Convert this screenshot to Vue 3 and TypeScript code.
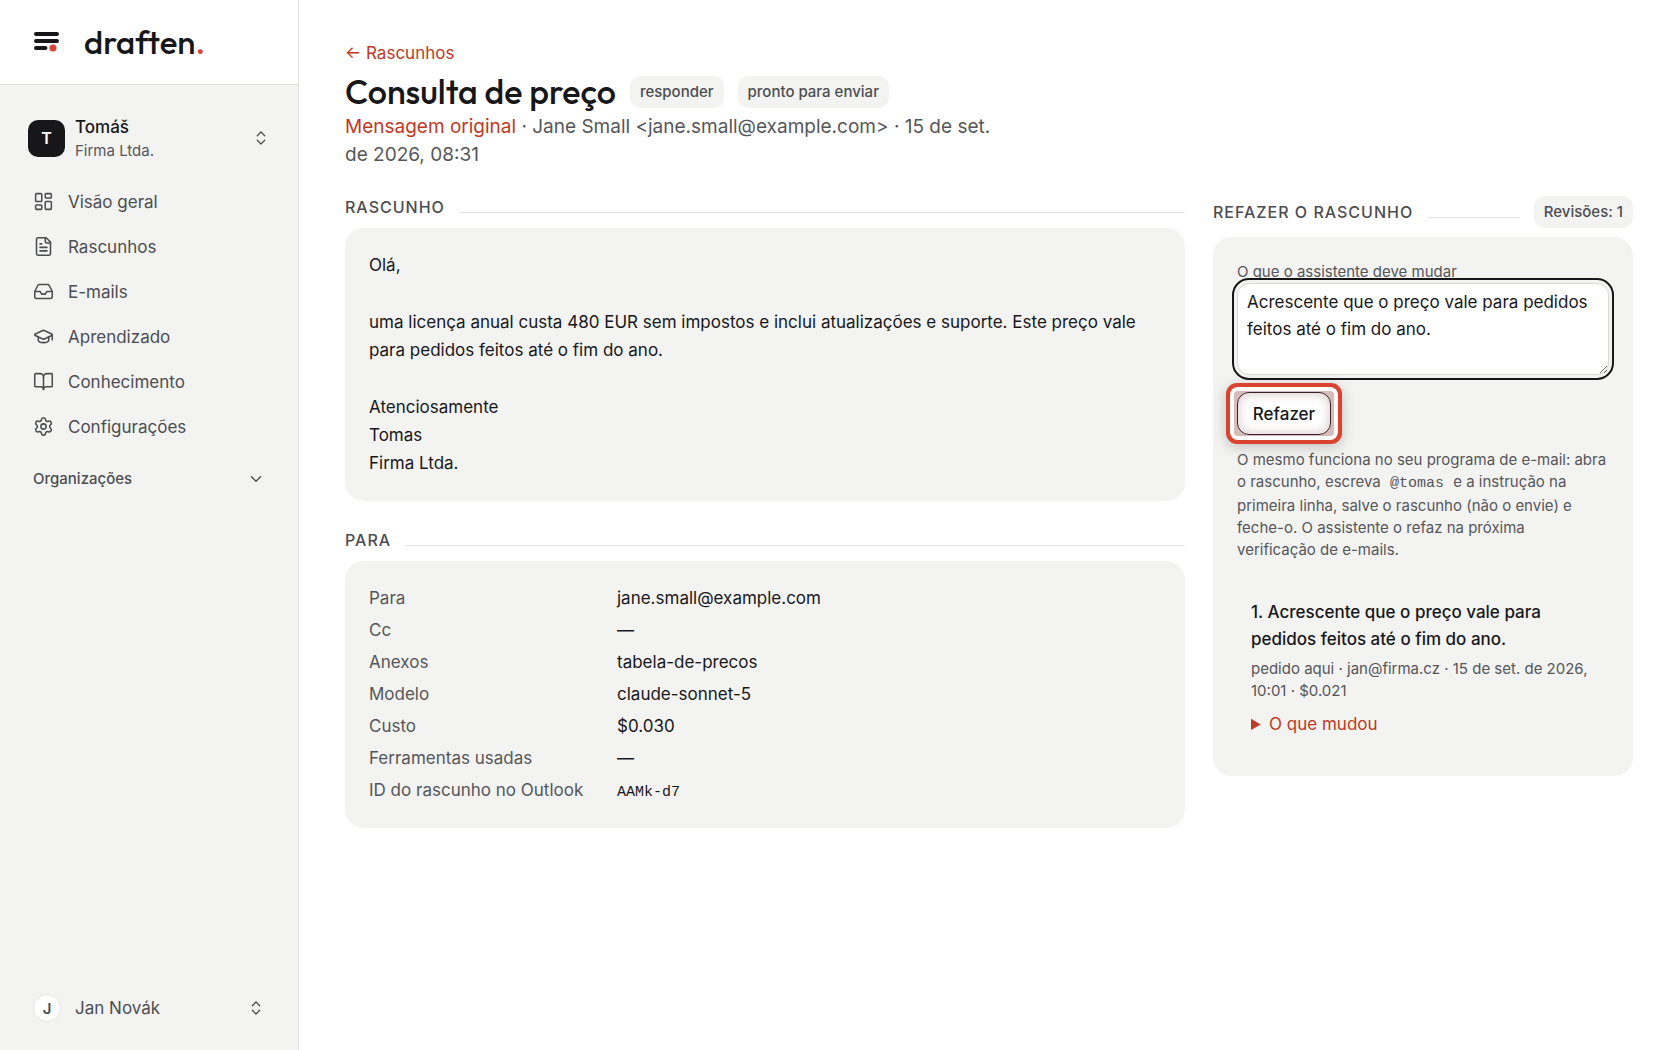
<script setup lang="ts">
import { ref } from 'vue'

interface NavItem {
  label: string
  icon: string[]
}

const navItems: NavItem[] = [
  {
    label: 'Visão geral',
    icon: [
      'M4 3h5a1 1 0 0 1 1 1v7a1 1 0 0 1-1 1H4a1 1 0 0 1-1-1V4a1 1 0 0 1 1-1z',
      'M15 3h5a1 1 0 0 1 1 1v3a1 1 0 0 1-1 1h-5a1 1 0 0 1-1-1V4a1 1 0 0 1 1-1z',
      'M15 12h5a1 1 0 0 1 1 1v7a1 1 0 0 1-1 1h-5a1 1 0 0 1-1-1v-7a1 1 0 0 1 1-1z',
      'M4 16h5a1 1 0 0 1 1 1v3a1 1 0 0 1-1 1H4a1 1 0 0 1-1-1v-3a1 1 0 0 1 1-1z',
    ],
  },
  {
    label: 'Rascunhos',
    icon: [
      'M15 2H6a2 2 0 0 0-2 2v16a2 2 0 0 0 2 2h12a2 2 0 0 0 2-2V7Z',
      'M14 2v4a2 2 0 0 0 2 2h4',
      'M10 9H8',
      'M16 13H8',
      'M16 17H8',
    ],
  },
  {
    label: 'E-mails',
    icon: [
      'M22 12h-6l-2 3h-4l-2-3H2',
      'M5.45 5.11 2 12v6a2 2 0 0 0 2 2h16a2 2 0 0 0 2-2v-6l-3.45-6.89A2 2 0 0 0 16.76 4H7.24a2 2 0 0 0-1.79 1.11z',
    ],
  },
  {
    label: 'Aprendizado',
    icon: [
      'M21.42 10.922a1 1 0 0 0-.019-1.838L12.83 5.18a2 2 0 0 0-1.66 0L2.6 9.08a1 1 0 0 0 0 1.832l8.57 3.908a2 2 0 0 0 1.66 0z',
      'M22 10v6',
      'M6 12.5V16a6 3 0 0 0 12 0v-3.5',
    ],
  },
  {
    label: 'Conhecimento',
    icon: [
      'M12 7v14',
      'M3 18a1 1 0 0 1-1-1V4a1 1 0 0 1 1-1h5a4 4 0 0 1 4 4 4 4 0 0 1 4-4h5a1 1 0 0 1 1 1v13a1 1 0 0 1-1 1h-6a3 3 0 0 0-3 3 3 3 0 0 0-3-3z',
    ],
  },
  {
    label: 'Configurações',
    icon: [
      'M9.671 4.136a2.34 2.34 0 0 1 4.659 0 2.34 2.34 0 0 0 3.319 1.915 2.34 2.34 0 0 1 2.33 4.033 2.34 2.34 0 0 0 0 3.831 2.34 2.34 0 0 1-2.33 4.033 2.34 2.34 0 0 0-3.319 1.915 2.34 2.34 0 0 1-4.659 0 2.34 2.34 0 0 0-3.32-1.915 2.34 2.34 0 0 1-2.33-4.033 2.34 2.34 0 0 0 0-3.831A2.34 2.34 0 0 1 6.35 6.051a2.34 2.34 0 0 0 3.319-1.915',
      'M15 12a3 3 0 1 1-6 0 3 3 0 0 1 6 0z',
    ],
  },
]

const details = [
  { term: 'Para', value: 'jane.small@example.com' },
  { term: 'Cc', value: '—' },
  { term: 'Anexos', value: 'tabela-de-precos' },
  { term: 'Modelo', value: 'claude-sonnet-5' },
  { term: 'Custo', value: '$0.030' },
  { term: 'Ferramentas usadas', value: '—' },
  { term: 'ID do rascunho no Outlook', value: 'AAMk-d7', mono: true },
]

const instruction = ref('Acrescente que o preço vale para pedidos feitos até o fim do ano.')
</script>

<template>
  <div class="app">
    <aside class="sidebar">
      <div class="brand">
        <svg class="brand-mark" viewBox="0 0 28 22" aria-hidden="true">
          <g stroke="#17171a" stroke-width="4" stroke-linecap="round">
            <path d="M3 3h21M3 10h21M3 17h9.500" />
          </g>
          <circle cx="20" cy="17" r="3.500" fill="#d9432f" />
        </svg>
        <span class="brand-name">draften<span class="brand-dot">.</span></span>
      </div>

      <div class="side-body">
        <button class="switcher" type="button">
          <span class="avatar">T</span>
          <span class="who">
            <strong>Tomáš</strong>
            <small>Firma Ltda.</small>
          </span>
          <svg class="icon small" viewBox="0 0 24 24"><path d="m7 15 5 5 5-5M7 9l5-5 5 5" /></svg>
        </button>

        <nav class="nav">
          <a v-for="item in navItems" :key="item.label" href="#">
            <svg class="icon" viewBox="0 0 24 24" aria-hidden="true">
              <path v-for="d in item.icon" :key="d" :d="d" />
            </svg>
            {{ item.label }}
          </a>
        </nav>

        <button class="group" type="button">
          Organizações
          <svg class="icon small" viewBox="0 0 24 24"><path d="m6 9 6 6 6-6" /></svg>
        </button>

        <button class="account" type="button">
          <span class="initial">J</span>
          <span class="account-name">Jan Novák</span>
          <svg class="icon small" viewBox="0 0 24 24"><path d="m7 15 5 5 5-5M7 9l5-5 5 5" /></svg>
        </button>
      </div>
    </aside>

    <main class="main">
      <header class="page-head">
        <a class="back" href="#">← Rascunhos</a>
        <div class="title-row">
          <h1>Consulta de preço</h1>
          <span class="pill">responder</span>
          <span class="pill">pronto para enviar</span>
        </div>
        <p class="meta">
          <a href="#">Mensagem original</a> · Jane Small &lt;jane.small@example.com&gt; · 15 de set. de 2026, 08:31
        </p>
      </header>

      <div class="columns">
        <div class="col">
          <section>
            <h2 class="section-head">Rascunho</h2>
            <div class="card letter">
              <p>Olá,</p>
              <p>uma licença anual custa 480 EUR sem impostos e inclui atualizações e suporte. Este preço vale para pedidos feitos até o fim do ano.</p>
              <p>Atenciosamente<br />Tomas<br />Firma Ltda.</p>
            </div>
          </section>

          <section>
            <h2 class="section-head">Para</h2>
            <dl class="card details">
              <template v-for="row in details" :key="row.term">
                <dt>{{ row.term }}</dt>
                <dd :class="{ mono: row.mono }">{{ row.value }}</dd>
              </template>
            </dl>
          </section>
        </div>

        <section>
          <div class="section-row">
            <h2 class="section-head">Refazer o rascunho</h2>
            <span class="pill">Revisões: 1</span>
          </div>
          <div class="card redo">
            <label for="instruction">O que o assistente deve mudar</label>
            <textarea id="instruction" v-model="instruction" rows="3"></textarea>
            <div class="spotlight">
              <button class="redo-button" type="button">Refazer</button>
            </div>
            <p class="hint">
              O mesmo funciona no seu programa de e-mail: abra o rascunho, escreva
              <code>@tomas</code> e a instrução na primeira linha, salve o rascunho (não o envie) e
              feche-o. O assistente o refaz na próxima<br />verificação de e-mails.
            </p>
            <article class="revision">
              <h3>1. Acrescente que o preço vale para pedidos feitos até o fim do ano.</h3>
              <p>pedido aqui · jan@firma.cz · 15 de set. de 2026, 10:01 · $0.021</p>
              <details>
                <summary>O que mudou</summary>
              </details>
            </article>
          </div>
        </section>
      </div>
    </main>
  </div>
</template>

<style>
body {
  margin: 0;
  background: #fff;
}
</style>

<style scoped>
.app {
  display: grid;
  grid-template-columns: 299px minmax(0, 1fr);
  min-height: 100vh;
  font-family: Inter, "Liberation Sans", sans-serif;
  font-size: 17px;
  line-height: 28px;
  color: #17171a;
}

*,
*::before,
*::after {
  box-sizing: border-box;
}

h1,
h2,
h3,
p,
dl,
dd {
  margin: 0;
}

a {
  color: #be3a25;
  text-decoration: none;
}

button {
  border: 0;
  padding: 0;
  background: none;
  color: inherit;
  font: inherit;
  text-align: left;
}

/* Sidebar */
.sidebar {
  display: flex;
  flex-direction: column;
  background: #f3f3f1;
  border-right: 1px solid #e4e4e2;
}

.brand {
  display: flex;
  align-items: center;
  gap: 23px;
  height: 85px;
  padding-left: 33px;
  background: #fff;
  border-bottom: 1px solid #e0e0de;
}

.brand-mark {
  width: 28px;
  height: 22px;
}

.brand-name {
  font-family: Outfit, Lato, sans-serif;
  font-size: 33px;
  font-weight: 500;
}

.brand-dot {
  color: #d9432f;
}

.side-body {
  flex: 1;
  display: flex;
  flex-direction: column;
  padding: 28px;
}

.icon {
  flex: none;
  width: 21px;
  height: 21px;
  fill: none;
  stroke: currentColor;
  stroke-width: 1.75;
  stroke-linecap: round;
  stroke-linejoin: round;
}

.icon.small {
  width: 18px;
  height: 18px;
  color: #4c4d51;
  margin-left: auto;
}

.switcher {
  display: flex;
  align-items: center;
  gap: 10px;
  height: 50px;
}

.avatar {
  display: grid;
  place-items: center;
  width: 37px;
  height: 37px;
  border-radius: 10px;
  background: #17171a;
  color: #fff;
  font-size: 16px;
  font-weight: 600;
}

.who {
  display: flex;
  flex-direction: column;
  padding-top: 2px;
  line-height: 24px;
}

.who strong {
  font-weight: 500;
}

.who small {
  font-size: 15px;
  color: #55565a;
}

.nav {
  display: flex;
  flex-direction: column;
  margin-top: 16px;
}

.nav a {
  display: flex;
  align-items: center;
  gap: 14px;
  height: 45px;
  padding-left: 5px;
  color: #4c4d51;
}

.group {
  display: flex;
  align-items: center;
  height: 36px;
  margin-top: 12px;
  padding: 0 5px;
  color: #4c4d51;
  font-size: 15px;
  font-weight: 500;
}

.account {
  display: flex;
  align-items: center;
  gap: 14px;
  margin-top: auto;
  padding: 0 5px;
  color: #4c4d51;
}

.initial {
  display: grid;
  place-items: center;
  width: 28px;
  height: 28px;
  border: 1px solid #e4e4e2;
  border-radius: 50%;
  background: #fff;
  font-size: 15px;
  font-weight: 600;
}

/* Page */
.main {
  padding: 39px 47px 39px 46px;
}

.page-head {
  display: flex;
  flex-direction: column;
}

.back {
  align-self: flex-start;
}

.title-row {
  display: flex;
  align-items: center;
  gap: 14px;
  padding-top: 3px;
}

h1 {
  font-family: Outfit, Lato, sans-serif;
  font-size: 34px;
  font-weight: 500;
  line-height: 43px;
}

.pill {
  flex: none;
  padding: 2px 10px;
  border-radius: 10px;
  background: #f3f3f1;
  color: #4c4d51;
  font-size: 15px;
  font-weight: 500;
}

.meta {
  max-width: 654px;
  font-size: 19px;
  color: #55565a;
}

.columns {
  display: grid;
  grid-template-columns: minmax(0, 2fr) minmax(0, 1fr);
  gap: 28px;
  align-items: start;
  margin-top: 27px;
}

.col {
  display: flex;
  flex-direction: column;
  gap: 28px;
}

.section-head {
  flex: 1;
  display: flex;
  align-items: baseline;
  gap: 14px;
  margin-bottom: 10px;
  color: #4c4d51;
  font-size: 16px;
  font-weight: 500;
  line-height: 22px;
  letter-spacing: 1px;
  text-transform: uppercase;
}

.section-head::after {
  content: "";
  flex: 1;
  border-bottom: 1px solid #e4e4e2;
}

.section-row {
  display: flex;
  align-items: center;
  gap: 14px;
  margin-bottom: 9px;
}

.section-row .section-head {
  margin: 0;
}

.card {
  padding: 23px 24px 24px;
  border-radius: 19px;
  background: #f3f3f1;
}

.letter {
  display: flex;
  flex-direction: column;
  gap: 29px;
}

.details {
  display: grid;
  grid-template-columns: 220px 1fr;
  align-items: baseline;
  gap: 4px 28px;
}

.details dt {
  color: #55565a;
}

.mono {
  font-family: "Liberation Mono", monospace;
  font-size: 15px;
  line-height: 22px;
}

.redo {
  display: flex;
  flex-direction: column;
  align-items: flex-start;
}

.redo label {
  font-size: 15px;
  line-height: 23px;
  color: #55565a;
}

textarea {
  width: 100%;
  height: 92px;
  padding: 5px 9px;
  border: 1px solid #d9d9d6;
  border-radius: 12px;
  outline: 2px solid #17171a;
  outline-offset: 3px;
  background: #fff;
  color: inherit;
  font: inherit;
  line-height: 27px;
  resize: vertical;
}

/* Highlight frame around the action being pointed out */
.spotlight {
  margin: 16px 0 0 -3px;
  padding: 1px 3px;
  border-radius: 4px;
  background: #d6bcba;
  box-shadow:
    0 0 0 4px #fff,
    0 0 0 8px #d9432f,
    0 3px 14px 8px #0003;
}

.redo-button {
  display: block;
  min-width: 94px;
  height: 43px;
  border: 1px solid #3a2226;
  border-radius: 12px;
  background: #fff;
  box-shadow: inset 0 0 12px #d8c6c6;
  font-weight: 500;
  text-align: center;
}

.hint {
  margin-top: 13px;
  font-size: 15px;
  line-height: 22px;
  color: #55565a;
}

.hint code {
  padding: 0 5px;
  font-family: "Liberation Mono", monospace;
  font-size: 15px;
}

.revision {
  margin-top: 24px;
  padding: 14px;
}

.revision h3 {
  font-size: 17px;
  font-weight: 500;
  line-height: 27px;
}

.revision p {
  margin-top: 5px;
  font-size: 15px;
  line-height: 22px;
  color: #55565a;
}

.revision details {
  margin-top: 8px;
}

.revision summary {
  color: #be3a25;
}
</style>
